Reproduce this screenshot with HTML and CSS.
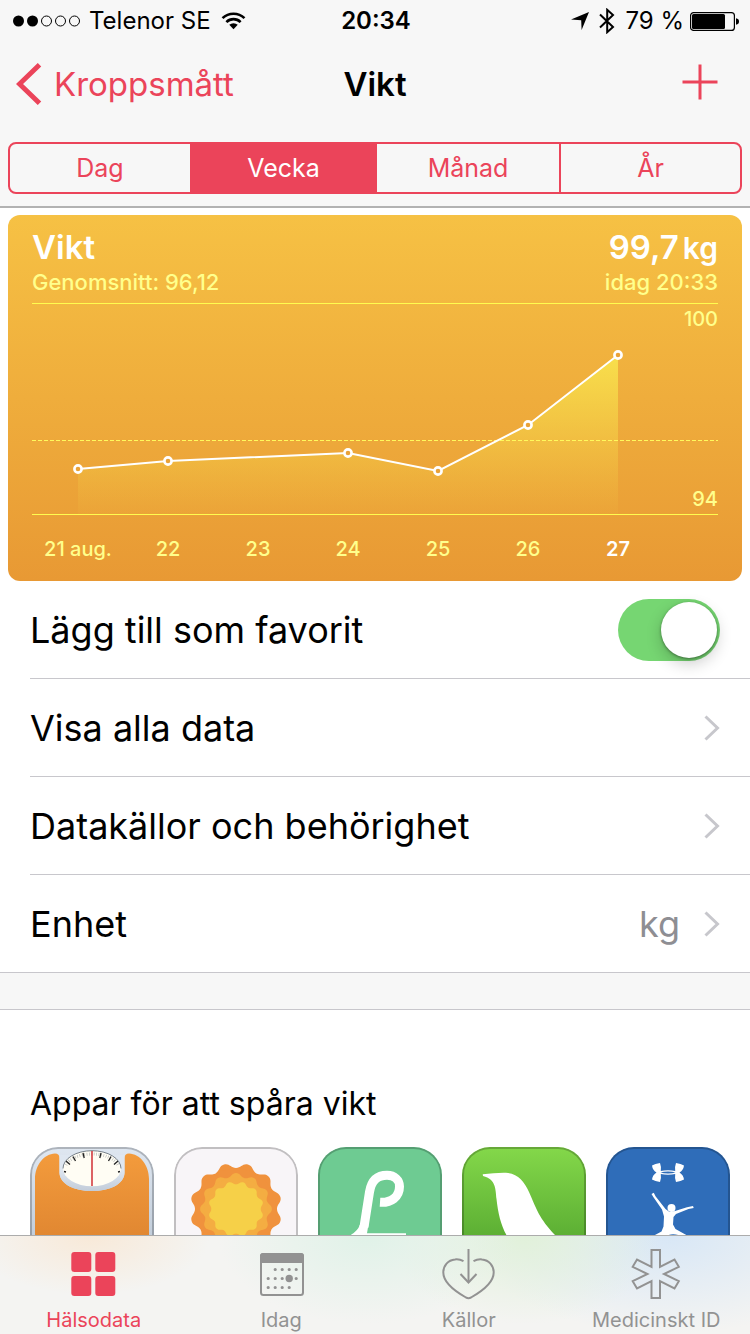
FILE: index.html
```html
<!DOCTYPE html>
<html lang="sv">
<head>
<meta charset="utf-8">
<meta name="viewport" content="width=device-width, initial-scale=1">
<title>Vikt</title>
<link rel="stylesheet" href="styles.css">
</head>
<body>
<div class="app">
  <header class="top">
    <div class="status">
      <div class="status-left">
        <svg width="68" height="12" viewBox="0 0 68 12" aria-hidden="true">
          <circle cx="5.5" cy="6" r="5.5"/><circle cx="19.5" cy="6" r="5.5"/>
          <g fill="none" stroke="#000"><circle cx="33.5" cy="6" r="5"/><circle cx="47.5" cy="6" r="5"/><circle cx="61.5" cy="6" r="5"/></g>
        </svg>
        <span>Telenor SE</span>
        <svg class="wifi" width="25" height="18" viewBox="0 0 26 18" aria-hidden="true">
          <path d="M13 17.5 8.6 13a6.4 6.4 0 0 1 8.8 0Z"/>
          <g fill="none" stroke="#000" stroke-width="2.7"><path d="M5.6 10.1a10.6 10.6 0 0 1 14.8 0"/><path d="M1.6 6a16.4 16.4 0 0 1 22.8 0"/></g>
        </svg>
      </div>
      <time class="clock">20:34</time>
      <div class="status-right">
        <svg width="18" height="18" viewBox="0 0 18 18" aria-hidden="true"><path d="M18 0 10.6 18 10.2 8.2 0 7.6Z"/></svg>
        <svg class="bluetooth" width="16" height="26" viewBox="0 0 16 26" aria-hidden="true"><path d="M1 6.5 14 19 8.2 24.2V1.8L14 7 1 19.5" fill="none" stroke="#000" stroke-width="2"/></svg>
        <span>79 %</span>
        <svg width="49" height="19" viewBox="0 0 49 19" aria-hidden="true">
          <rect x=".6" y=".6" width="43.8" height="17.8" rx="3" fill="none" stroke="#000" stroke-width="1.2"/>
          <rect x="2" y="2" width="33" height="15" rx="1.5"/><path d="M46 6.2q3 .6 3 3.3t-3 3.3Z"/>
        </svg>
      </div>
    </div>
    <nav class="nav">
      <button class="back" type="button">
        <svg width="26" height="42" viewBox="0 0 26 42" aria-hidden="true"><path d="M23.5 1.8 3.5 21l20 19.2" fill="none" stroke="currentColor" stroke-width="5"/></svg>
        <span>Kroppsmått</span>
      </button>
      <h1>Vikt</h1>
      <button class="add" type="button" aria-label="Lägg till">
        <svg width="36" height="36" viewBox="0 0 36 36" aria-hidden="true"><path d="M18 .5v35M.5 18h35" fill="none" stroke="currentColor" stroke-width="3"/></svg>
      </button>
    </nav>
    <div class="segments">
      <button type="button">Dag</button>
      <button type="button" class="selected" aria-pressed="true">Vecka</button>
      <button type="button">Månad</button>
      <button type="button">År</button>
    </div>
  </header>

  <main class="content">
    <section class="card">
      <div class="card-head">
        <h2>Vikt</h2>
        <p class="value">99,7<span>kg</span></p>
        <p>Genomsnitt: 96,12</p>
        <p class="when">idag 20:33</p>
      </div>
      <div class="plot">
        <svg class="graph" viewBox="0 0 686 212" role="img" aria-label="Vikt per dag">
          <defs>
            <linearGradient id="area" gradientUnits="userSpaceOnUse" x1="0" y1="52" x2="0" y2="211">
              <stop offset="0" stop-color="#f8e04c"/><stop offset="1" stop-color="#f2c845" stop-opacity=".08"/>
            </linearGradient>
          </defs>
          <path d="M46 166 136 158 316 150 406 168 496 122 586 52V211H46Z" fill="url(#area)"/>
          <path d="M0 .5H686M0 211.5H686" stroke="#fffc4f"/>
          <path d="M0 137.5H686" stroke="#fff95c" stroke-dasharray="4 2"/>
          <path d="M46 166 136 158 316 150 406 168 496 122 586 52" fill="none" stroke="#fff" stroke-width="2"/>
          <g fill="#e9a238" stroke="#fff" stroke-width="2.6"><circle cx="46" cy="166" r="3.6"/><circle cx="136" cy="158" r="3.6"/><circle cx="316" cy="150" r="3.6"/><circle cx="406" cy="168" r="3.6"/><circle cx="496" cy="122" r="3.6"/><circle cx="586" cy="52" r="3.6"/></g>
        </svg>
        <div class="scale"><span>100</span><span>94</span></div>
      </div>
      <div class="days"><span>21 aug.</span><span>22</span><span>23</span><span>24</span><span>25</span><span>26</span><span class="today">27</span></div>
    </section>

    <section class="list">
      <label class="row" for="favorite"><span class="label">Lägg till som favorit</span><input class="switch" id="favorite" type="checkbox" role="switch" checked></label>
      <button class="row" type="button"><span class="label">Visa alla data</span><svg class="chevron" viewBox="0 0 16 26" aria-hidden="true"><path d="m1.5 1.5 12 11.5-12 11.5"/></svg></button>
      <button class="row" type="button"><span class="label">Datakällor och behörighet</span><svg class="chevron" viewBox="0 0 16 26" aria-hidden="true"><path d="m1.5 1.5 12 11.5-12 11.5"/></svg></button>
      <button class="row" type="button"><span class="label">Enhet</span><span class="unit">kg</span><svg class="chevron" viewBox="0 0 16 26" aria-hidden="true"><path d="m1.5 1.5 12 11.5-12 11.5"/></svg></button>
    </section>

    <section class="apps">
      <h2>Appar för att spåra vikt</h2>
      <div class="app-row">
        <button class="app-icon" type="button" aria-label="Våg">
          <svg viewBox="0 0 124 124">
            <defs>
              <linearGradient id="rim" x1="0" x2="0" y1="0" y2="1"><stop offset="0" stop-color="#dfe7f1"/><stop offset=".7" stop-color="#c3cedb"/></linearGradient>
              <linearGradient id="mat" x1="0" x2="0" y1="0" y2="1"><stop offset="0" stop-color="#f39b3c"/><stop offset="1" stop-color="#d97f2d"/></linearGradient>
              <linearGradient id="cup" x1="0" x2="0" y1="0" y2="1"><stop offset=".4" stop-color="#dfe7f1"/><stop offset="1" stop-color="#c2ccd9"/></linearGradient>
            </defs>
            <rect width="124" height="124" fill="url(#rim)"/>
            <path d="M5 124V32C5 18 14 7 25 6.5q4.500 0 4.500 4.500v15C30 37 44 44 62 44s32-7 32.500-18V11q0-4.500 4.500-4.500C110 7 119 18 119 32v92Z" fill="url(#mat)"/>
            <path d="M29.500 8v18C30 37 44 44 62 44s32-7 32.500-18V8Z" fill="url(#cup)"/>
            <ellipse cx="62" cy="21.500" rx="29" ry="17.800" fill="#fffdf4"/>
            <path d="M33 21.500a29 17.800 0 0 1 58 0" fill="none" stroke="#77808a"/>
            <path d="M36 18a27 15 0 0 1 52 0" fill="none" stroke="#b9bbb8" stroke-width="3" stroke-dasharray=".7 1.700"/>
            <path d="m34 24.500 2 .5m0-11 4 3.500m3-8 2.500 4.500m7.500-8 1.200 5M90 24.500l-2 .5m0-11-4 3.500m-3-8-2.500 4.500m-7.500-8-1.200 5" stroke="#222" stroke-width="1.300"/>
            <path d="M62 4v35" stroke="#d43b40" stroke-width="1.600"/>
          </svg>
        </button>
        <button class="app-icon" type="button" aria-label="Sol">
          <svg viewBox="0 0 124 124">
            <defs>
              <path id="ray" d="M0 0-10.600-39.600C-5.500-41-5.500-46 0-46S5.500-41 10.600-39.600Z"/>
              <g id="ring"><use href="#ray"/><use href="#ray" transform="rotate(30)"/><use href="#ray" transform="rotate(60)"/><use href="#ray" transform="rotate(90)"/><use href="#ray" transform="rotate(120)"/><use href="#ray" transform="rotate(150)"/><use href="#ray" transform="rotate(180)"/><use href="#ray" transform="rotate(210)"/><use href="#ray" transform="rotate(240)"/><use href="#ray" transform="rotate(270)"/><use href="#ray" transform="rotate(300)"/><use href="#ray" transform="rotate(330)"/><circle r="40.500"/></g>
            </defs>
            <rect width="124" height="124" fill="#f8f5f8"/>
            <g transform="translate(62 62)">
              <use href="#ring" transform="rotate(15)" fill="#f0923d"/>
              <use href="#ring" transform="scale(.78)" fill="#f4ad42"/>
              <use href="#ring" transform="rotate(15) scale(.6)" fill="#f6d048"/>
            </g>
          </svg>
        </button>
        <button class="app-icon" type="button" aria-label="Lifesum">
          <svg viewBox="0 0 124 124">
            <rect width="124" height="124" fill="#6ecb92"/>
            <path d="M62 55.300C73 56 81.500 50 81.500 39.500c0-6.500-5-11.200-12.500-11.200-9.500 0-15.500 4.700-17.500 16.700L46 80" fill="none" stroke="#fff" stroke-width="9"/>
            <path d="M41.700 78Q40 84 31 89l57 1v-3.700H49L50.400 78Z" fill="#fff"/>
          </svg>
        </button>
        <button class="app-icon" type="button" aria-label="Fågel">
          <svg viewBox="0 0 124 124">
            <defs><linearGradient id="leaf" x1="0" x2="0" y1="0" y2="1"><stop offset="0" stop-color="#84d84a"/><stop offset="1" stop-color="#4d9f2b"/></linearGradient></defs>
            <rect width="124" height="124" fill="url(#leaf)"/>
            <path d="M20.700 27.300Q33 25.500 44 25.700C56 26.500 62 34 67 45c8 18 10 26 26 43l17 18H56L45 89C39 79 36 66 34.500 52 33.500 42 34 32 21 28.900Z" fill="#fff"/>
          </svg>
        </button>
        <button class="app-icon" type="button" aria-label="MyFitnessPal">
          <svg viewBox="0 0 124 124">
            <rect width="124" height="124" fill="#2f6db9"/>
            <g fill="#fff">
              <path id="horn" d="M46 18.500Q49 16.800 54 16 55.500 20 54.800 24q3.200-.8 7.200-.8v1.200q-4.500 0-7.500 1.100 3 1.100 7.500 1.100v1.200q-4 0-7.200-.8Q55.500 31 54 35 49 34.200 46 32.500 46.500 28 50.500 25.500 46.500 23 46 18.500Z"/>
              <use href="#horn" transform="matrix(-1 0 0 1 124 0)"/>
              <circle cx="65.500" cy="61" r="4"/>
              <path d="m45.500 47 2.300-1.200 1.700 3.400L59.500 62l4 3 5.500-1 12-3.700 6-1.200.7 2-5.200 1-12.500 4.800-2.500 3-.5 7.500 2.500 4.500 11.500 6.500V92H48v-3.500L55.500 84.500l2-5 .5-10L56 62.500 47.300 50Z"/>
            </g>
            <path d="M60 89q6-3 14-.5V90H60Z" fill="#2f6db9"/>
          </svg>
        </button>
      </div>
    </section>
  </main>

  <nav class="tabs">
    <a class="tab active" href="#halsodata" aria-current="page">
      <svg viewBox="0 0 52 52" aria-hidden="true"><g fill="currentColor"><rect x="3.300" y="4" width="20" height="20" rx="3"/><rect x="27.300" y="4" width="20" height="20" rx="3"/><rect x="3.300" y="28" width="20" height="20" rx="3"/><rect x="27.300" y="28" width="20" height="20" rx="3"/></g></svg>
      <span>Hälsodata</span>
    </a>
    <a class="tab" href="#idag">
      <svg viewBox="0 0 52 52" aria-hidden="true">
        <rect x="6" y="6" width="42" height="41" rx="2.500" fill="none" stroke="currentColor" stroke-width="2"/>
        <path d="M5 17V8q0-3 3-3h38q3 0 3 3v9q0-2-2-2H7q-2 0-2 2Z" fill="currentColor"/>
        <g fill="none" stroke="currentColor" stroke-width="3.200" stroke-linecap="round"><path d="M20.200 21.500h22" stroke-dasharray="0 7"/><path d="M13.200 30.500h29" stroke-dasharray="0 7"/><path d="M13.200 39.500h22" stroke-dasharray="0 7"/></g>
        <circle cx="34.200" cy="30.500" r="3.700" fill="currentColor"/>
      </svg>
      <span>Idag</span>
    </a>
    <a class="tab" href="#kallor">
      <svg viewBox="0 0 52 52" aria-hidden="true"><g fill="none" stroke="currentColor" stroke-width="2"><path d="M20.500 13.200C17.500 11.500 15 11 12 11.400 5 12 .3 17.500.3 24.500c0 10 13 19.500 22.700 25q2.500 1.300 5 0c9.700-5.500 22.700-15 22.700-25 0-7-4.700-12.500-11.700-13.100-3-.4-5.500.1-8.500 1.800"/><path d="M25.500 1v33"/><path d="m17.500 26 8 8.500 8-8.500"/></g></svg>
      <span>Källor</span>
    </a>
    <a class="tab" href="#medicinskt-id">
      <svg viewBox="0 0 52 52" aria-hidden="true"><path d="M21.500 2h8.500v16.800L44.500 11.500l4.300 7.300L34 26l14.800 7.200-4.300 7.300L30 33.200V50h-8.500V33.200L7 40.500 2.700 33.200 17.500 26 2.700 18.800 7 11.500l14.500 7.300Z" fill="none" stroke="currentColor" stroke-width="2"/></svg>
      <span>Medicinskt ID</span>
    </a>
  </nav>
</div>
</body>
</html>
```
FILE: styles.css
```css
* { box-sizing: border-box; }

body {
  margin: 0;
  background: #fff;
  color: #000;
  font-family: Inter, "Liberation Sans", sans-serif;
}

h1, h2, p { margin: 0; }

button {
  margin: 0;
  padding: 0;
  border: 0;
  background: none;
  color: inherit;
  font: inherit;
}

svg { display: block; flex: none; }

.app {
  display: flex;
  flex-direction: column;
  height: 100vh;
}

.top {
  flex: none;
  padding: 0 8px 12px;
  background: #f7f7f7;
  border-bottom: 2px solid #b2b2b2;
}

/* Status bar */
.status {
  display: grid;
  grid-template-columns: 1fr auto 1fr;
  align-items: center;
  height: 42px;
  padding: 0 3px 0 5px;
  font-size: 24px;
  line-height: 42px;
}

.status-left, .status-right {
  display: flex;
  align-items: center;
  gap: 8px;
}

.wifi { margin-left: 2px; }

.status-right {
  justify-content: flex-end;
  gap: 6px;
}

.bluetooth { margin: 0 4px; }

.clock { font-weight: 600; }

/* Navigation bar */
.nav {
  display: grid;
  grid-template-columns: 1fr auto 1fr;
  align-items: center;
  height: 84px;
  padding: 0 8px;
}

.nav h1 {
  font-size: 33px;
  font-weight: 600;
  line-height: 40px;
}

.back {
  display: flex;
  align-items: center;
  justify-self: start;
  gap: 12px;
  color: #eb445a;
  font-size: 33px;
  line-height: 40px;
}

.add {
  justify-self: end;
  margin-right: 16px;
  padding-bottom: 4px;
  color: #eb445a;
}

.segments {
  display: grid;
  grid-template-columns: 180fr 185fr 184fr 181fr;
  height: 52px;
  margin-top: 16px;
  overflow: hidden;
  border: 2px solid #eb445a;
  border-radius: 8px;
  color: #eb445a;
  font-size: 25px;
}

.segments button + button { border-left: 2px solid #eb445a; }

.segments .selected {
  background: #eb445a;
  color: #fff;
}

.content {
  flex: 1;
  min-height: 0;
  overflow: auto;
  scrollbar-width: none;
}

/* Chart card */
.card {
  margin: 7px 8px 0;
  padding: 12px 24px 16px;
  border-radius: 12px;
  background: linear-gradient(#f6c144, #e89934);
  color: #ffff8c;
  font-weight: 500;
}

.card-head {
  display: grid;
  grid-template-columns: 1fr auto;
  align-content: start;
  align-items: baseline;
  height: 76px;
  font-size: 22px;
  line-height: 28px;
}

.card-head h2, .value {
  color: #fff;
  font-size: 33px;
  font-weight: 600;
  line-height: 40px;
}

.value { text-align: right; }

.value span {
  margin-left: 4px;
  font-size: 30px;
}

.when { text-align: right; }

.plot { display: grid; }

.graph, .scale { grid-area: 1 / 1; }

.graph {
  width: 100%;
  height: auto;
}

.scale {
  display: flex;
  flex-direction: column;
  justify-content: space-between;
  padding: 4px 0;
  font-size: 20px;
  line-height: 24px;
  text-align: right;
}

.days {
  display: grid;
  grid-template-columns: repeat(7, 90fr) 55fr;
  padding: 19px 0 1px 1px;
  font-size: 20px;
  line-height: 30px;
  text-align: center;
}

.today {
  color: #fff;
  font-weight: 600;
}

/* Settings list */
.list {
  padding-left: 30px;
  border-bottom: 1px solid #c8c7cc;
}

.row {
  display: flex;
  align-items: center;
  width: 100%;
  height: 98px;
  padding-right: 30px;
  border-bottom: 1px solid #c8c7cc;
  font-size: 36px;
  line-height: 48px;
  text-align: left;
}

.row:last-child {
  height: 97px;
  border-bottom: 0;
}

.label { flex: 1; }

.unit {
  margin-right: 24px;
  color: #8e8e93;
}

.chevron {
  width: 16px;
  height: 26px;
  fill: none;
  stroke: #c7c7cc;
  stroke-width: 3px;
}

.switch {
  flex: none;
  width: 102px;
  height: 62px;
  margin: 0;
  padding: 3px;
  appearance: none;
  border-radius: 31px;
  background: #76d672;
}

.switch::before {
  content: "";
  display: block;
  width: 56px;
  height: 56px;
  margin-left: auto;
  border-radius: 50%;
  background: #fff;
  box-shadow: 0 1px 3px rgba(0, 0, 0, .4), 0 6px 16px rgba(0, 0, 0, .2);
}

/* App suggestions */
.apps {
  padding: 75px 0 0 30px;
  border-top: 36px solid #f7f7f7;
  background: linear-gradient(#c8c7cc 1px, #fff 1px);
}

.apps h2 {
  font-size: 32px;
  font-weight: 400;
  line-height: 40px;
}

.app-row {
  display: flex;
  gap: 20px;
  margin-top: 23px;
}

.app-icon {
  flex: none;
  position: relative;
  width: 124px;
  height: 124px;
  overflow: hidden;
  border-radius: 28px;
}

.app-icon::after {
  content: "";
  position: absolute;
  inset: 0;
  border: 2px solid rgba(0, 0, 0, .22);
  border-radius: 28px;
}

/* Tab bar */
.tabs {
  display: flex;
  flex: none;
  height: 99px;
  border-top: 1px solid #acacac;
  background:
    radial-gradient(ellipse 16% 60% at 12% 0, #f8e9d8, transparent),
    radial-gradient(ellipse 20% 90% at 49% 0, #e0f2e8, transparent),
    radial-gradient(ellipse 18% 90% at 70% 0, #e1f1da, transparent),
    radial-gradient(ellipse 26% 100% at 89% 0, #d8e7f6, transparent),
    #f4f4f2;
}

.tab {
  display: flex;
  flex: 1;
  flex-direction: column;
  align-items: center;
  gap: 8px;
  padding-top: 12px;
  color: #929292;
  font-size: 20px;
  line-height: 24px;
  text-decoration: none;
}

.tab svg {
  width: 52px;
  height: 52px;
  overflow: visible;
}

.tab.active { color: #eb445a; }
```
